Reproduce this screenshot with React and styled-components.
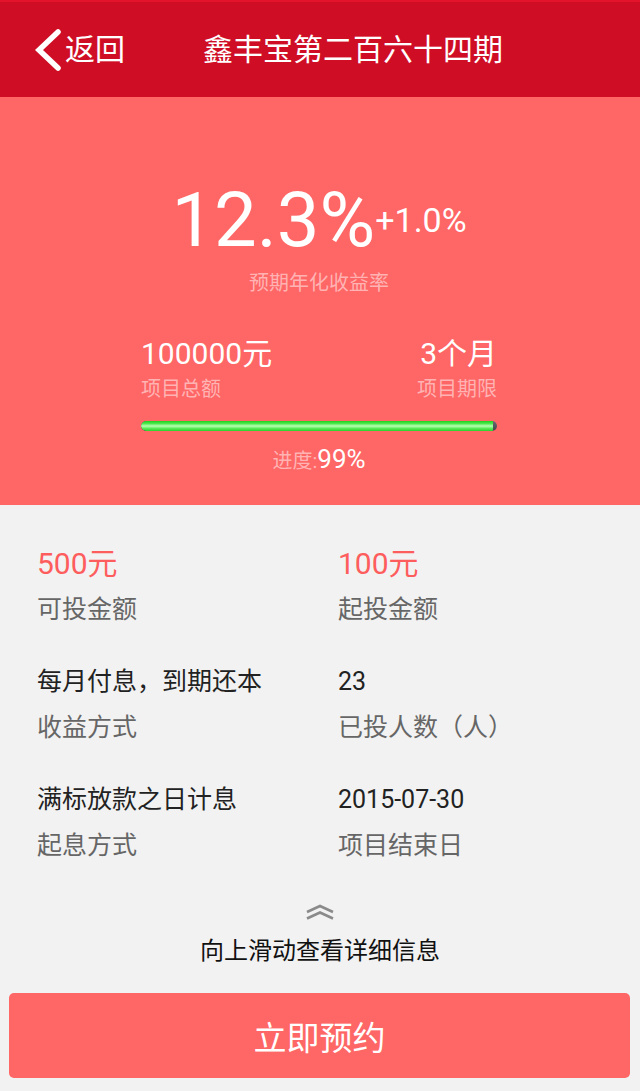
import React from "react";
import styled, { createGlobalStyle } from "styled-components";

const Global = createGlobalStyle`
  html, body { margin: 0; padding: 0; background: #f2f2f2; }
  body { font-family: Roboto, "Noto Sans CJK SC", sans-serif; }
  * { box-sizing: border-box; }
`;

const Page = styled.div`
  width: 640px;
  min-height: 1091px;
  background: #f2f2f2;
  display: flex;
  flex-direction: column;
`;

const Header = styled.header`
  height: 97px;
  background: #cf0e26;
  border-top: 2px solid #e3132c;
  display: flex;
  align-items: center;
  padding-left: 34px;
  color: #fff;
`;

const Back = styled.div`
  display: flex;
  align-items: center;
  gap: 3px;
  font-size: 30px;
  line-height: 40px;
`;

const Title = styled.h1`
  margin: 0 0 0 78px;
  font-size: 30px;
  font-weight: 400;
  line-height: 40px;
`;

const Hero = styled.section`
  background: #ff6666;
  padding: 85px 143px 28px 141px;
  display: flex;
  flex-direction: column;
  align-items: stretch;
  color: #fff;
`;

const RateRow = styled.div`
  display: flex;
  justify-content: center;
  align-items: flex-start;
`;

const Rate = styled.span`
  font-size: 76px;
  line-height: 76px;
`;

const Bonus = styled.span`
  font-size: 34px;
  line-height: 34px;
  margin-top: 21px;
`;

const Caption = styled.div`
  text-align: ${(p) => p.$align || "center"};
  font-size: 20px;
  line-height: 28px;
  color: #ffb3b3;
  margin-top: ${(p) => p.$mt || 0}px;
`;

const Stats = styled.div`
  display: flex;
  justify-content: space-between;
  margin-top: 39px;
`;

const Stat = styled.div`
  display: flex;
  flex-direction: column;
  align-items: ${(p) => (p.$right ? "flex-end" : "flex-start")};
`;

const StatValue = styled.div`
  font-size: 30px;
  line-height: 36px;
`;

const Track = styled.div`
  margin-top: 18px;
  height: 10px;
  border-radius: 5px;
  background: linear-gradient(to bottom, #6a6a72, #44444c);
  overflow: hidden;
`;

const Fill = styled.div`
  height: 100%;
  border-radius: 5px 0 0 5px;
  background: linear-gradient(
    to bottom,
    #1fcf1f 0%,
    #4be84b 25%,
    #b8ffb0 50%,
    #57ea57 75%,
    #2bcf2b 100%
  );
`;

const Progress = styled.div`
  margin-top: 12px;
  text-align: center;
  line-height: 32px;
  font-size: 20px;
  color: #ffb3b3;
  & > b {
    font-weight: 400;
    font-size: 26px;
    color: #fff;
  }
`;

const Details = styled.section`
  display: grid;
  grid-template-columns: 301px 1fr;
  row-gap: 26px;
  padding: 37px 0 0 37px;
`;

const Cell = styled.div`
  display: flex;
  flex-direction: column;
`;

const Value = styled.div`
  font-size: ${(p) => (p.$accent ? 30 : 25)}px;
  line-height: 44px;
  color: ${(p) => (p.$accent ? "#fe5d5d" : "#222")};
`;

const Label = styled.div`
  font-size: 25px;
  line-height: 48px;
  color: #666;
`;

const Hint = styled.div`
  display: flex;
  flex-direction: column;
  align-items: center;
  margin-top: 34px;
`;

const HintText = styled.div`
  margin-top: 14px;
  font-size: 24px;
  line-height: 34px;
  color: #111;
`;

const Button = styled.button`
  margin: 25px 10px 0 9px;
  height: 85px;
  border: none;
  border-radius: 5px;
  background: #ff6666;
  color: #fff;
  font-family: Roboto, "Noto Sans CJK SC", sans-serif;
  font-size: 33px;
  letter-spacing: 0;
`;

const ChevronLeft = () => (
  <svg width="28" height="44" viewBox="0 0 28 44">
    <path d="M24 4 L5 22 L24 40" fill="none" stroke="#fff" strokeWidth="5.5" strokeLinecap="round" strokeLinejoin="miter" />
  </svg>
);

const DoubleUp = () => (
  <svg width="30" height="16" viewBox="0 0 30 16">
    <path d="M2 8 L15 2 L28 8" fill="none" stroke="#8a8a8a" strokeWidth="2.6" />
    <path d="M2 14.5 L15 8.5 L28 14.5" fill="none" stroke="#8a8a8a" strokeWidth="2.6" />
  </svg>
);

const details = [
  { value: "500元", label: "可投金额", accent: true },
  { value: "100元", label: "起投金额", accent: true },
  { value: "每月付息，到期还本", label: "收益方式" },
  { value: "23", label: "已投人数（人）" },
  { value: "满标放款之日计息", label: "起息方式" },
  { value: "2015-07-30", label: "项目结束日" },
];

export default function App() {
  const progress = 99;
  return (
    <Page>
      <Global />
      <Header>
        <Back>
          <ChevronLeft />
          <span>返回</span>
        </Back>
        <Title>鑫丰宝第二百六十四期</Title>
      </Header>
      <Hero>
        <RateRow>
          <Rate>12.3%</Rate>
          <Bonus>+1.0%</Bonus>
        </RateRow>
        <Caption $mt={11}>预期年化收益率</Caption>
        <Stats>
          <Stat>
            <StatValue>100000元</StatValue>
            <Caption $mt={3}>项目总额</Caption>
          </Stat>
          <Stat $right>
            <StatValue>3个月</StatValue>
            <Caption $mt={3}>项目期限</Caption>
          </Stat>
        </Stats>
        <Track>
          <Fill style={{ width: `${progress}%` }} />
        </Track>
        <Progress>
          进度:<b>{progress}%</b>
        </Progress>
      </Hero>
      <Details>
        {details.map((d) => (
          <Cell key={d.label}>
            <Value $accent={d.accent}>{d.value}</Value>
            <Label>{d.label}</Label>
          </Cell>
        ))}
      </Details>
      <Hint>
        <DoubleUp />
        <HintText>向上滑动查看详细信息</HintText>
      </Hint>
      <Button>立即预约</Button>
    </Page>
  );
}
